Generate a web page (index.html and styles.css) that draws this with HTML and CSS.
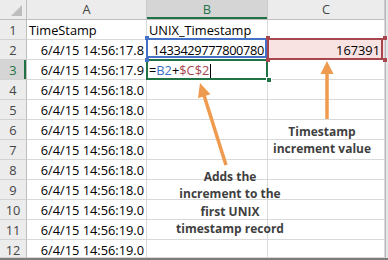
FILE: index.html
```html
<!DOCTYPE html>
<html>
<head>
<meta charset="utf-8">
<link rel="stylesheet" href="styles.css">
</head>
<body>
<div class="sheet">
  <div class="grid">
    <div class="corner"></div>
    <div class="ch">A</div>
    <div class="ch ch-sel">B</div>
    <div class="ch">C</div>
    <div class="edge"></div>

    <div class="rh">1</div>
    <div class="c">TimeStamp</div>
    <div class="c">UNIX_Timestamp</div>
    <div class="c"></div>
    <div class="edge"></div>

    <div class="rh">2</div>
    <div class="c r">6/4/15 14:56:17.8</div>
    <div class="c r ref-b num">1433429777800780<span class="hd hd-b tl"></span><span class="hd hd-b bl"></span></div>
    <div class="c r ref-c">167391<span class="hd hd-c tl"></span><span class="hd hd-c bl"></span><span class="hd hd-c tr"></span><span class="hd hd-c br"></span></div>
    <div class="edge"></div>

    <div class="rh rh-sel">3</div>
    <div class="c r">6/4/15 14:56:17.9</div>
    <div class="c active">=<span class="f-b">B2</span>+<span class="f-c">$C$2</span><span class="caret"></span><span class="fill"></span></div>
    <div class="c"></div>
    <div class="edge"></div>

    <div class="rh">4</div>
    <div class="c r">6/4/15 14:56:18.0</div>
    <div class="c"></div>
    <div class="c"></div>
    <div class="edge"></div>

    <div class="rh">5</div>
    <div class="c r">6/4/15 14:56:18.0</div>
    <div class="c"></div>
    <div class="c"></div>
    <div class="edge"></div>

    <div class="rh">6</div>
    <div class="c r">6/4/15 14:56:18.0</div>
    <div class="c"></div>
    <div class="c"></div>
    <div class="edge"></div>

    <div class="rh">7</div>
    <div class="c r">6/4/15 14:56:18.0</div>
    <div class="c"></div>
    <div class="c"></div>
    <div class="edge"></div>

    <div class="rh">8</div>
    <div class="c r">6/4/15 14:56:18.0</div>
    <div class="c"></div>
    <div class="c"></div>
    <div class="edge"></div>

    <div class="rh">9</div>
    <div class="c r">6/4/15 14:56:18.0</div>
    <div class="c"></div>
    <div class="c"></div>
    <div class="edge"></div>

    <div class="rh">10</div>
    <div class="c r">6/4/15 14:56:19.0</div>
    <div class="c"></div>
    <div class="c"></div>
    <div class="edge"></div>

    <div class="rh">11</div>
    <div class="c r">6/4/15 14:56:19.0</div>
    <div class="c"></div>
    <div class="c"></div>
    <div class="edge"></div>

    <div class="rh">12</div>
    <div class="c r">6/4/15 14:56:19.0</div>
    <div class="c"></div>
    <div class="c"></div>
    <div class="edge"></div>
  </div>

  <svg class="arrows" width="388" height="260" viewBox="0 0 388 260">
    <line x1="327" y1="72" x2="327" y2="119" stroke="#ef9b4f" stroke-width="3.5"/>
    <polygon points="327,61 320.5,74 333.5,74" fill="#ef9b4f"/>
    <line x1="203.6" y1="94" x2="226" y2="165" stroke="#ef9b4f" stroke-width="3.5"/>
    <polygon points="200,83 210.4,94.3 198,98.3" fill="#ef9b4f"/>
  </svg>

  <div class="note note-inc">Timestamp<br>increment value</div>
  <div class="note note-add">Adds the<br>increment to the<br>first UNIX<br>timestamp record</div>
</div>
</body>
</html>
```

FILE: styles.css
```css
* {
  box-sizing: border-box;
  margin: 0;
  padding: 0;
}

html, body {
  background: #ffffff;
}

body {
  width: 388px;
  height: 260px;
  overflow: hidden;
  font-family: "Open Sans", "Noto Sans", sans-serif;
  font-size: 12.8px;
  color: #000000;
}

.sheet {
  position: relative;
  width: 388px;
  height: 260px;
  border-bottom: 2px solid #7d7d7d;
  overflow: hidden;
}

.grid {
  display: grid;
  grid-template-columns: 27px 120px 121px 117px 3px;
  grid-template-rows: 20px repeat(11, 20px) 18px;
}

.corner {
  position: relative;
  background: #ececec;
  border-right: 1px solid #bdbdbd;
  border-bottom: 1px solid #bdbdbd;
}

.corner::after {
  content: "";
  position: absolute;
  right: 4px;
  bottom: 3px;
  width: 11px;
  height: 11px;
  background: #bdbdbd;
  clip-path: polygon(100% 0, 100% 100%, 0 100%);
}

.ch {
  background: #ececec;
  border-right: 1px solid #cbcbcb;
  border-bottom: 1px solid #bdbdbd;
  color: #444444;
  text-align: center;
  line-height: 19px;
}

.ch-sel {
  background: #d5d5d5;
  color: #217346;
  box-shadow: inset 0 -2px 0 #217346;
}

.rh {
  background: #ececec;
  border-right: 1px solid #bdbdbd;
  border-bottom: 1px solid #d2d2d2;
  color: #444444;
  text-align: center;
  padding-top: 2px;
  line-height: 17px;
}

.rh-sel {
  background: #d5d5d5;
  color: #217346;
  box-shadow: inset -2px 0 0 #217346;
}

.c {
  position: relative;
  border-right: 1px solid #d9d9d9;
  border-bottom: 1px solid #d9d9d9;
  padding: 2px 2px 0 2px;
  line-height: 17px;
  white-space: nowrap;
}

.r {
  text-align: right;
}

.num {
  letter-spacing: -0.35px;
  padding-right: 3px;
}

.edge {
  background: #e4e9ec;
  border-left: 1px solid #b8b8b8;
}

.ref-b::after {
  content: "";
  position: absolute;
  top: -2px;
  left: -1px;
  right: 0;
  bottom: 1px;
  border: 2px solid #4571c4;
}

.ref-c {
  background: #f9e2e2;
  padding-right: 4px;
}

.ref-c::after {
  content: "";
  position: absolute;
  top: -2px;
  left: -1px;
  right: 1px;
  bottom: -1px;
  border: 2px solid #a8464e;
}

.hd {
  position: absolute;
  width: 4px;
  height: 4px;
  z-index: 2;
}

.hd-b {
  background: #4571c4;
}

.hd-c {
  background: #a8464e;
}

.hd.tl { left: -2px; top: -4px; }
.hd.bl { left: -2px; top: 18px; }
.hd.tr { left: 115px; top: -4px; }
.hd.br { left: 115px; top: 18px; }

.active::after {
  content: "";
  position: absolute;
  top: -1px;
  left: -1px;
  right: -1px;
  bottom: -1px;
  border: 2px solid #217346;
}

.f-b {
  color: #3c6fc6;
}

.f-c {
  color: #a8464e;
}

.caret {
  display: inline-block;
  width: 1px;
  height: 14px;
  margin-left: 1px;
  background: #000000;
  vertical-align: -3px;
}

.fill {
  position: absolute;
  left: 119px;
  top: 17px;
  width: 6px;
  height: 6px;
  background: #217346;
  border: 1px solid #ffffff;
  z-index: 2;
}

.arrows {
  position: absolute;
  left: 0;
  top: 0;
  pointer-events: none;
}

.note {
  position: absolute;
  font-weight: 700;
  font-size: 12px;
  color: #3f3f3f;
  text-align: center;
  white-space: nowrap;
}

.note-inc {
  left: 262px;
  top: 124px;
  width: 120px;
  line-height: 16.5px;
}

.note-add {
  left: 165px;
  top: 168px;
  width: 130px;
  line-height: 17.3px;
}
```
